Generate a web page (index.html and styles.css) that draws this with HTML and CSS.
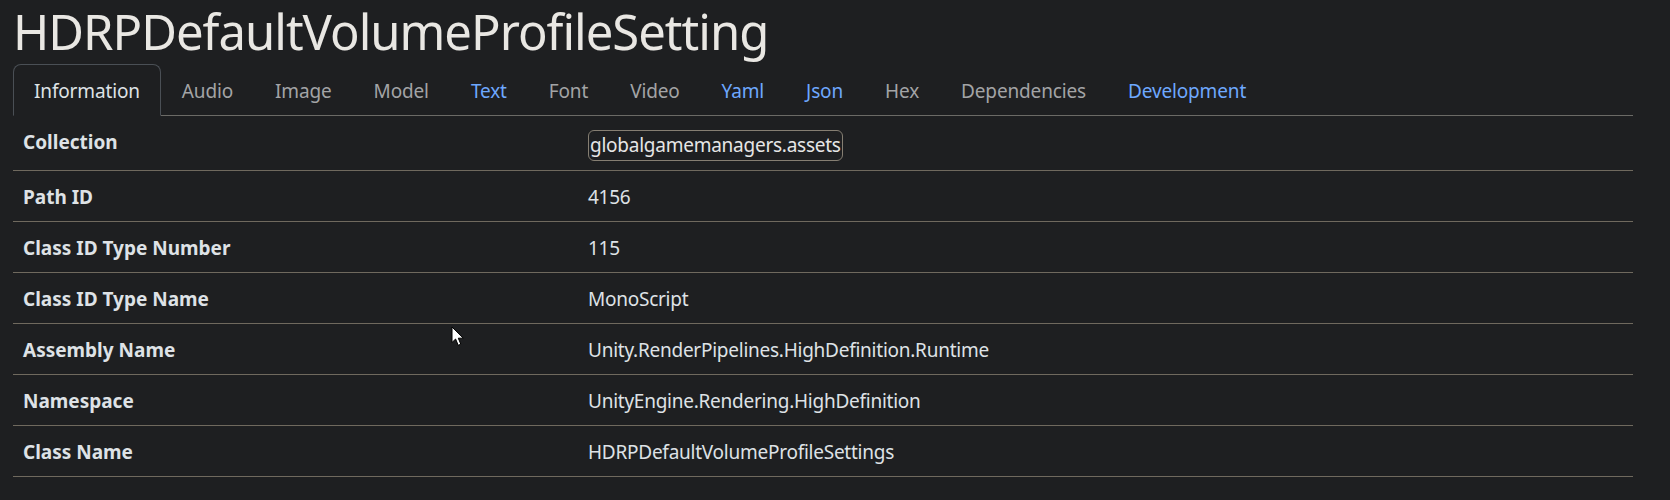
FILE: index.html
```html
<!DOCTYPE html>
<html lang="en">
<head>
    <meta charset="UTF-8">
    <meta name="viewport" content="width=device-width, initial-scale=1.0">
    <title>HDRPDefaultVolumeProfileSetting</title>
    <link rel="stylesheet" href="styles.css">
</head>
<body>
    <h1 class="page-title">HDRPDefaultVolumeProfileSetting</h1>

    <ul class="tabs">
        <li><a class="tab active" href="#">Information</a></li>
        <li><a class="tab" href="#">Audio</a></li>
        <li><a class="tab" href="#">Image</a></li>
        <li><a class="tab" href="#">Model</a></li>
        <li><a class="tab link" href="#">Text</a></li>
        <li><a class="tab" href="#">Font</a></li>
        <li><a class="tab" href="#">Video</a></li>
        <li><a class="tab link" href="#">Yaml</a></li>
        <li><a class="tab link" href="#">Json</a></li>
        <li><a class="tab" href="#">Hex</a></li>
        <li><a class="tab" href="#">Dependencies</a></li>
        <li><a class="tab link" href="#">Development</a></li>
    </ul>

    <table class="info-table">
        <tr>
            <th>Collection</th>
            <td><button class="collection-btn">globalgamemanagers.assets</button></td>
        </tr>
        <tr>
            <th>Path ID</th>
            <td>4156</td>
        </tr>
        <tr>
            <th>Class ID Type Number</th>
            <td>115</td>
        </tr>
        <tr>
            <th>Class ID Type Name</th>
            <td>MonoScript</td>
        </tr>
        <tr>
            <th>Assembly Name</th>
            <td>Unity.RenderPipelines.HighDefinition.Runtime</td>
        </tr>
        <tr>
            <th>Namespace</th>
            <td>UnityEngine.Rendering.HighDefinition</td>
        </tr>
        <tr>
            <th>Class Name</th>
            <td>HDRPDefaultVolumeProfileSettings</td>
        </tr>
    </table>

    <!-- mouse pointer from the screenshot -->
    <svg class="cursor" width="15" height="21" viewBox="0 0 15 21">
        <path d="M1 1 L1 16.5 L4.6 13 L7.2 19.3 L9.8 18.2 L7.3 12.2 L12.3 12.2 Z" fill="#fff" stroke="#000" stroke-width="1"/>
    </svg>
</body>
</html>
```

FILE: styles.css
```css
body {
    margin: 0;
    padding: 0 37px 0 13px;
    background-color: #1e1f21;
    color: #dee2e6;
    font-family: "Noto Sans", "Open Sans", sans-serif;
    font-size: 19px;
    line-height: 30px;
    position: relative;
    height: 500px;
    overflow: hidden;
}

.page-title {
    margin: 0 0 2px 0;
    font-size: 49px;
    font-weight: 400;
    letter-spacing: -1px;
    line-height: 62px;
    color: #e9e7e3;
}

.tabs {
    list-style: none;
    display: flex;
    margin: 0;
    padding: 0;
    border-bottom: 1px solid #6b6a66;
}
.tabs li {
    margin-bottom: -1px;
}
.tab {
    display: block;
    padding: 11px 20px 9px;
    border: 1px solid transparent;
    border-top-left-radius: 8px;
    border-top-right-radius: 8px;
    color: #a3a4a6;
    text-decoration: none;
    letter-spacing: -0.15px;
}
.tab.link {
    color: #6ea8fe;
}
.tab.active {
    color: #dee2e6;
    background-color: #1e1f21;
    border-color: #4a4f55 #4a4f55 #1e1f21;
}

.info-table {
    width: 100%;
    border-collapse: collapse;
}
.info-table th,
.info-table td {
    padding: 11px 10px 9px;
    text-align: left;
    border-bottom: 1px solid #6f695e;
    vertical-align: top;
}
.info-table th {
    width: 545px;
    font-weight: 700;
}
.info-table td {
    letter-spacing: -0.25px;
}

.collection-btn {
    font: inherit;
    letter-spacing: inherit;
    color: #e6e6e6;
    background: transparent;
    border: 1px solid #857e72;
    border-radius: 6px;
    padding: 1px 1px 2px;
    margin-top: 3px;
    line-height: 26px;
}

.cursor {
    position: absolute;
    left: 451px;
    top: 326px;
}
```
